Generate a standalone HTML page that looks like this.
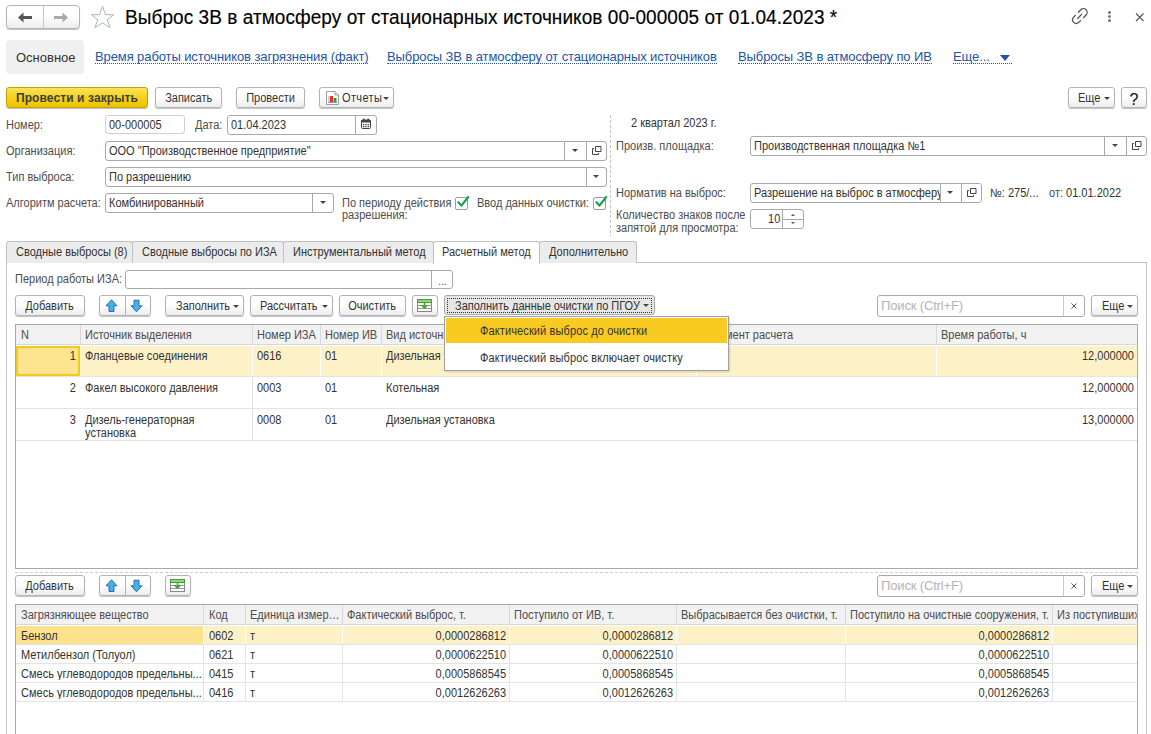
<!DOCTYPE html>
<html><head><meta charset="utf-8">
<style>
*{box-sizing:border-box;margin:0;padding:0}
html,body{width:1151px;height:734px;overflow:hidden;background:#fff}
body{position:relative;font-family:"Liberation Sans",sans-serif;font-size:11.5px;letter-spacing:-0.3px;color:#333}
.a{position:absolute;white-space:nowrap}
.lbl{position:absolute;white-space:nowrap;color:#4d4d4d;line-height:12px;font-size:12px;letter-spacing:0;transform:scaleX(.917);transform-origin:0 0}
.btn{position:absolute;border:1px solid #b4b4b4;border-radius:3px;background:linear-gradient(#fff 0%,#fff 45%,#ececec 100%);box-shadow:0 1px 1px rgba(0,0,0,.25);color:#333;text-align:center;line-height:20px;white-space:nowrap}
.fld{position:absolute;border:1px solid #a9a9a9;border-radius:3px;background:#fff;line-height:19px;padding-left:3px;white-space:nowrap;overflow:hidden;color:#333}
.div{position:absolute;top:0;bottom:0;width:1px;background:#a9a9a9}
.tri{position:absolute;width:0;height:0;border-left:3px solid transparent;border-right:3px solid transparent;border-top:3px solid #444}
.link{position:absolute;white-space:nowrap;color:#1c55a8;font-size:13px;line-height:12px;border-bottom:1px dotted #1c55a8;letter-spacing:-0.1px}

.tab{position:absolute;top:241px;height:22px;border:1px solid #c0c0c0;border-bottom:none;border-radius:3px 3px 0 0;background:#ececec;line-height:20px;padding-left:9px;color:#333;white-space:nowrap}
.tab.act{background:#fff;height:23px;padding-left:8px}
.hd{position:absolute;top:325px;width:1px;height:20px;background:#d8d8d8}
.rd{position:absolute;width:1px;background:#e0e0e0}
.th{position:absolute;top:329px;line-height:12px;color:#4d4d4d;white-space:nowrap;font-size:12px;letter-spacing:0;transform:scaleX(.917);transform-origin:0 0}
.td{position:absolute;line-height:12px;color:#333;white-space:nowrap;font-size:12px;letter-spacing:0;transform:scaleX(.917);transform-origin:0 0}
.td.r{transform-origin:100% 0}
.t{display:inline-block;font-size:12px;letter-spacing:0;transform:scaleX(.917);transform-origin:0 0}
</style></head><body>

<!-- header -->
<div class="btn" style="left:6px;top:5px;width:74px;height:24px;border-radius:4px"></div>
<div class="a" style="left:43px;top:6px;width:1px;height:22px;background:#c8c8c8"></div>
<svg class="a" style="left:17px;top:12px" width="16" height="12" viewBox="0 0 16 12"><path d="M1 5.5 L6.5 0.5 L6.5 4 L15 4 L15 7 L6.5 7 L6.5 10.5 Z" fill="#555"/></svg>
<svg class="a" style="left:53px;top:12px" width="16" height="12" viewBox="0 0 16 12"><path d="M15 5.5 L9.5 0.5 L9.5 4 L1 4 L1 7 L9.5 7 L9.5 10.5 Z" fill="#a8a8a8"/></svg>
<svg class="a" style="left:90px;top:6px" width="25" height="23" viewBox="0 0 25 23"><path d="M12.5 0.3 L15.5 8.6 L23.5 8.8 L17.2 13.8 L20.2 21.8 L12.5 16.8 L4.8 21.8 L7.8 13.8 L1.5 8.8 L9.5 8.6 Z" fill="none" stroke="#a9b5c1" stroke-width="1"/></svg>
<div class="a" style="left:125px;top:5px;font-size:19px;line-height:24px;color:#000;letter-spacing:0.06px;transform:scaleY(1.09);transform-origin:0 10px;-webkit-text-stroke:0.15px #000">Выброс 3В в атмосферу от стационарных источников 00-000005 от 01.04.2023 *</div>
<svg class="a" style="left:1068px;top:5px" width="24" height="22" viewBox="1068 5 24 22"><g fill="none" stroke="#505050" stroke-width="1.25" stroke-linecap="round"><path d="M1078.4 12.3 L1080.8 9.8 A3.7 3.7 0 0 1 1086.1 15 L1083.6 17.5"/><path d="M1075.4 15.4 L1073.4 17.4 A3.7 3.7 0 0 0 1078.6 22.6 L1080.6 20.6"/><path d="M1077.6 18.5 L1081.6 14.4"/></g></svg>
<div class="a" style="left:1108px;top:11px;width:3px;height:3px;border-radius:2px;background:#777"></div>
<div class="a" style="left:1108px;top:15px;width:3px;height:3px;border-radius:2px;background:#777"></div>
<div class="a" style="left:1108px;top:19px;width:3px;height:3px;border-radius:2px;background:#777"></div>
<svg class="a" style="left:1135px;top:12px" width="10" height="10" viewBox="0 0 10 10"><path d="M1 1.5 L8.5 9 M8.5 1.5 L1 9" stroke="#555" stroke-width="1.1"/></svg>

<!-- nav tabs -->
<div class="a" style="left:6px;top:40px;width:78px;height:34px;background:#f0f0f0;border-radius:4px"></div>
<div class="a" style="left:16px;top:50px;font-size:13px;line-height:16px;color:#333;letter-spacing:0">Основное</div>
<div class="link" style="left:95px;top:51px">Время работы источников загрязнения (факт)</div>
<div class="link" style="left:387px;top:51px">Выбросы ЗВ в атмосферу от стационарных источников</div>
<div class="link" style="left:738px;top:51px">Выбросы ЗВ в атмосферу по ИВ</div>
<div class="link" style="left:953px;top:51px;width:59px">Еще...</div>
<div class="tri" style="left:1000px;top:55px;border-left-width:5px;border-right-width:5px;border-top:6px solid #1c55a8"></div>


<!-- toolbar -->
<div class="btn" style="left:6px;top:87px;width:142px;height:21px;background:linear-gradient(#fbe25a 0%,#f5d21a 50%,#ebc300 100%);border-color:#c7a300;font-weight:bold;font-size:12px;color:#3e3e3e;line-height:21px;letter-spacing:0.1px">Провести и закрыть</div>
<div class="btn" style="left:155px;top:87px;width:67px;height:21px"><span class="t" style="transform-origin:50% 0">Записать</span></div>
<div class="btn" style="left:236px;top:87px;width:69px;height:21px"><span class="t" style="transform-origin:50% 0">Провести</span></div>
<div class="btn" style="left:319px;top:87px;width:75px;height:21px"></div>
<svg class="a" style="left:326px;top:91px" width="13" height="14" viewBox="0 0 13 14"><path d="M0.5 0.5 H9 L12.5 4 V13.5 H0.5 Z" fill="#fff" stroke="#8fa3b8"/><path d="M9 0.5 V4 H12.5" fill="#dfe6ee" stroke="#8fa3b8"/><rect x="2.5" y="5" width="1" height="6" fill="#c8a070"/><rect x="4" y="5" width="3" height="6" fill="#e83030"/><rect x="7.5" y="7" width="3" height="4" fill="#2aa02a"/><rect x="2" y="11" width="9" height="0.8" fill="#9070a0"/></svg>
<div class="a" style="left:342px;top:92px;line-height:12px;color:#333;font-size:12px;letter-spacing:0.4px;transform:scaleX(.917);transform-origin:0 0">Отчеты</div>
<div class="tri" style="left:383px;top:97px;border-left-width:3px;border-right-width:3px;border-top-width:3px"></div>
<div class="btn" style="left:1068px;top:87px;width:47px;height:21px"><span class="t" style="position:absolute;left:9px;top:0">Еще</span></div>
<div class="tri" style="left:1104px;top:97px"></div>
<div class="btn" style="left:1121px;top:87px;width:26px;height:21px;font-size:16px;color:#111;letter-spacing:0;line-height:23px;-webkit-text-stroke:0.1px #111">?</div>

<!-- form left -->
<div class="lbl" style="left:6px;top:119px">Номер:</div>
<div class="fld" style="left:105px;top:115px;width:80px;height:19px;border-color:#d0d0d0"><span class="t" style="transform-origin:0 0">00-000005</span></div>
<div class="lbl" style="left:195px;top:119px">Дата:</div>
<div class="fld" style="left:227px;top:115px;width:150px;height:20px"><span class="t" style="transform-origin:0 0">01.04.2023</span><div class="div" style="left:127px"></div></div>
<svg class="a" style="left:361px;top:118px" width="10" height="11" viewBox="0 0 10 11"><rect x="0.5" y="2" width="9" height="8.5" rx="1" fill="#fff" stroke="#444"/><rect x="0.5" y="2" width="9" height="2.5" fill="#444"/><rect x="2" y="0.5" width="1.5" height="2" fill="#444"/><rect x="6.5" y="0.5" width="1.5" height="2" fill="#444"/><g fill="#444"><rect x="2" y="6" width="1.3" height="1.3"/><rect x="4.3" y="6" width="1.3" height="1.3"/><rect x="6.6" y="6" width="1.3" height="1.3"/><rect x="2" y="8" width="1.3" height="1.3"/><rect x="4.3" y="8" width="1.3" height="1.3"/><rect x="6.6" y="8" width="1.3" height="1.3"/></g></svg>

<div class="lbl" style="left:6px;top:145px">Организация:</div>
<div class="fld" style="left:105px;top:141px;width:502px;height:20px"><span class="t" style="transform-origin:0 0">ООО "Производственное предприятие"</span><div class="div" style="left:458px"></div><div class="div" style="left:480px"></div></div>
<div class="tri" style="left:572px;top:149px;border-left-width:3px;border-right-width:3px"></div>
<svg class="a" style="left:591px;top:146px" width="11" height="10" viewBox="0 0 11 10"><path d="M4.5 0.5 H10 V5.5 H4.5 Z" fill="none" stroke="#444"/><path d="M3 2.5 H1.5 V8.5 H7.5 V7" fill="none" stroke="#444"/></svg>

<div class="lbl" style="left:6px;top:171px">Тип выброса:</div>
<div class="fld" style="left:105px;top:167px;width:502px;height:20px"><span class="t" style="transform-origin:0 0">По разрешению</span><div class="div" style="left:480px"></div></div>
<div class="tri" style="left:593px;top:175px;border-left-width:3px;border-right-width:3px"></div>

<div class="lbl" style="left:6px;top:197px">Алгоритм расчета:</div>
<div class="fld" style="left:105px;top:193px;width:229px;height:20px"><span class="t" style="transform-origin:0 0">Комбинированный</span><div class="div" style="left:206px"></div></div>
<div class="tri" style="left:320px;top:201px;border-left-width:3px;border-right-width:3px"></div>
<div class="lbl" style="left:342px;top:197px">По периоду действия<br>разрешения:</div>
<div class="a" style="left:455px;top:197px;width:13px;height:13px;border:1px solid #9d9d9d;border-radius:2px;background:#fff"></div>
<svg class="a" style="left:456px;top:193px" width="15" height="15" viewBox="0 0 15 15"><path d="M2.4 9.2 L5.4 12.6 L12.2 4" fill="none" stroke="#14a04a" stroke-width="2.1" stroke-linecap="round" stroke-linejoin="round"/></svg>
<div class="lbl" style="left:477px;top:197px">Ввод данных очистки:</div>
<div class="a" style="left:593px;top:197px;width:13px;height:13px;border:1px solid #9d9d9d;border-radius:2px;background:#fff"></div>
<svg class="a" style="left:594px;top:193px" width="15" height="15" viewBox="0 0 15 15"><path d="M2.4 9.2 L5.4 12.6 L12.2 4" fill="none" stroke="#14a04a" stroke-width="2.1" stroke-linecap="round" stroke-linejoin="round"/></svg>

<div class="a" style="left:610px;top:115px;width:1px;height:121px;background:repeating-linear-gradient(#c4c4c4 0 3px,transparent 3px 5px)"></div>

<!-- form right -->
<div class="lbl" style="left:631px;top:117px;color:#333">2 квартал 2023 г.</div>
<div class="lbl" style="left:616px;top:140px">Произв. площадка:</div>
<div class="fld" style="left:750px;top:136px;width:397px;height:20px"><span class="t" style="transform-origin:0 0">Производственная площадка №1</span><div class="div" style="left:353px"></div><div class="div" style="left:375px"></div></div>
<div class="tri" style="left:1112px;top:144px;border-left-width:3px;border-right-width:3px"></div>
<svg class="a" style="left:1131px;top:141px" width="11" height="10" viewBox="0 0 11 10"><path d="M4.5 0.5 H10 V5.5 H4.5 Z" fill="none" stroke="#444"/><path d="M3 2.5 H1.5 V8.5 H7.5 V7" fill="none" stroke="#444"/></svg>

<div class="lbl" style="left:616px;top:187px">Норматив на выброс:</div>
<div class="fld" style="left:750px;top:183px;width:232px;height:20px"><span class="t" style="transform-origin:0 0">Разрешение на выброс в атмосферу</span><div class="div" style="left:189px;background:#a9a9a9"></div><div class="div" style="left:210px"></div><div style="position:absolute;left:190px;top:0;bottom:0;width:40px;background:#fff"></div><div class="div" style="left:189px"></div><div class="div" style="left:210px"></div></div>
<div class="tri" style="left:947px;top:191px;border-left-width:3px;border-right-width:3px"></div>
<svg class="a" style="left:966px;top:188px" width="11" height="10" viewBox="0 0 11 10"><path d="M4.5 0.5 H10 V5.5 H4.5 Z" fill="none" stroke="#444"/><path d="M3 2.5 H1.5 V8.5 H7.5 V7" fill="none" stroke="#444"/></svg>
<div class="lbl" style="left:990px;top:187px;color:#333">№: 275/...</div>
<div class="lbl" style="left:1049px;top:187px"><span style="color:#4d4d4d">от:</span> <span style="color:#333">01.01.2022</span></div>

<div class="lbl" style="left:616px;top:209px;line-height:13px">Количество знаков после<br>запятой для просмотра:</div>
<div class="fld" style="left:750px;top:209px;width:54px;height:20px;text-align:right;padding-right:23px"><span class="t" style="transform-origin:100% 0">10</span><div class="div" style="left:31px"></div><div style="position:absolute;left:32px;right:0;top:9px;height:1px;background:#a9a9a9"></div></div>
<div class="tri" style="left:791px;top:214px;border-top:0;border-bottom:2px solid #555;border-left-width:2px;border-right-width:2px"></div>
<div class="tri" style="left:791px;top:222px;border-top:2px solid #555;border-left-width:2px;border-right-width:2px"></div>


<!-- tabs -->
<div class="a" style="left:6px;top:262px;width:1141px;height:1px;background:#bdbdbd"></div>
<div class="a" style="left:6px;top:262px;width:1px;height:472px;background:#c6c6c6"></div>
<div class="a" style="left:1146px;top:262px;width:1px;height:472px;background:#c6c6c6"></div>
<div class="tab" style="left:6px;width:127px"><span class="t" style="transform-origin:0 0">Сводные выбросы (8)</span></div>
<div class="tab" style="left:132px;width:152px"><span class="t" style="transform-origin:0 0">Сводные выбросы по ИЗА</span></div>
<div class="tab" style="left:283px;width:151px"><span class="t" style="transform-origin:0 0">Инструментальный метод</span></div>
<div class="tab act" style="left:433px;width:107px"><span class="t" style="transform-origin:0 0">Расчетный метод</span></div>
<div class="tab" style="left:539px;width:98px"><span class="t" style="transform-origin:0 0">Дополнительно</span></div>

<div class="lbl" style="left:15px;top:273px">Период работы ИЗА:</div>
<div class="fld" style="left:125px;top:270px;width:328px;height:19px"><div class="div" style="left:305px"></div><span style="position:absolute;left:312px;top:1px;color:#555">...</span></div>

<!-- toolbar 2 -->
<div class="btn" style="left:15px;top:295px;width:70px;height:21px"><span class="t" style="transform-origin:50% 0">Добавить</span></div>
<div class="btn" style="left:99px;top:295px;width:52px;height:21px"></div>
<div class="a" style="left:125px;top:296px;width:1px;height:19px;background:#b4b4b4"></div>
<svg class="a" style="left:105px;top:299px" width="13" height="14" viewBox="0 0 13 14"><path d="M6.5 0.8 L12 6.8 H9 V12.5 H4 V6.8 H1 Z" fill="#46b0ea" stroke="#1a66a0" stroke-width="0.9"/></svg>
<svg class="a" style="left:130px;top:299px" width="13" height="14" viewBox="0 0 13 14"><path d="M6.5 12.8 L12 6.8 H9 V1.2 H4 V6.8 H1 Z" fill="#46b0ea" stroke="#1a66a0" stroke-width="0.9"/></svg>
<div class="btn" style="left:165px;top:295px;width:79px;height:21px;text-align:left;padding-left:10px"><span class="t" style="transform-origin:0 0">Заполнить</span></div>
<div class="tri" style="left:233px;top:305px"></div>
<div class="btn" style="left:250px;top:295px;width:83px;height:21px;text-align:left;padding-left:9px"><span class="t" style="transform-origin:0 0">Рассчитать</span></div>
<div class="tri" style="left:322px;top:305px"></div>
<div class="btn" style="left:339px;top:295px;width:67px;height:21px"><span class="t" style="transform-origin:50% 0">Очистить</span></div>
<div class="btn" style="left:412px;top:295px;width:26px;height:21px"></div>
<svg class="a" style="left:417px;top:299px" width="15" height="13" viewBox="0 0 15 13"><rect x="0.5" y="0.5" width="14" height="12" fill="#fff" stroke="#888"/><rect x="0.5" y="0.5" width="14" height="3" fill="#8fd87a" stroke="#4a9a3a"/><path d="M1 6.5 H14 M1 9.5 H14" stroke="#999" stroke-width="1"/><path d="M7.5 3.5 V8 M4.5 6 L7.5 9 L10.5 6" fill="none" stroke="#4aa03a" stroke-width="1.6"/></svg>
<div class="btn" style="left:444px;top:295px;width:211px;height:20px;background:#e6e6e6;box-shadow:none;border-color:#a8a8a8;text-align:left;padding-left:10px;line-height:20px"><span class="t" style="transform-origin:0 0">Заполнить данные очистки по ПГОУ</span></div>
<div class="a" style="left:447px;top:298px;width:205px;height:15px;border:1px dotted #333"></div>
<div class="tri" style="left:643px;top:304px"></div>

<div class="fld" style="left:877px;top:295px;width:208px;height:22px;color:#b4b4b4;line-height:20px;border-color:#a9a9a9;font-size:13px;letter-spacing:-0.15px;padding-left:3px">Поиск (Ctrl+F)<div class="div" style="left:185px;background:#c8c8c8"></div></div>
<svg class="a" style="left:1070px;top:302px" width="8" height="8" viewBox="0 0 8 8"><path d="M1.5 1.5 L6.5 6.5 M6.5 1.5 L1.5 6.5" stroke="#555" stroke-width="1"/></svg>
<div class="btn" style="left:1091px;top:295px;width:47px;height:21px"><span class="t" style="position:absolute;left:10px;top:0">Еще</span></div>
<div class="tri" style="left:1127px;top:305px"></div>

<!-- table 1 -->
<div class="a" style="left:15px;top:324px;width:1123px;height:245px;border:1px solid #a9a9a9;background:#fff"></div>
<div class="a" style="left:16px;top:325px;width:1121px;height:20px;background:#f2f2f2;border-bottom:1px solid #d8d8d8"></div>
<div class="hd" style="left:80px"></div><div class="hd" style="left:252px"></div><div class="hd" style="left:320px"></div><div class="hd" style="left:381px"></div><div class="hd" style="left:696px"></div><div class="hd" style="left:936px"></div>
<div class="th" style="left:21px">N</div>
<div class="th" style="left:85px">Источник выделения</div>
<div class="th" style="left:257px">Номер ИЗА</div>
<div class="th" style="left:325px">Номер ИВ</div>
<div class="th" style="left:386px">Вид источника</div>
<div class="th" style="left:701px">Документ расчета</div>
<div class="th" style="left:941px">Время работы, ч</div>

<div class="a" style="left:16px;top:346px;width:1121px;height:31px;background:#fdf1c8;border-bottom:1px solid #e4e4e4"></div>
<div class="a" style="left:16px;top:346px;width:64px;height:30px;background:#fde48f;border:2px solid #f8c81c"></div>
<div class="rd" style="left:252px;top:346px;height:30px;background:#fff"></div><div class="rd" style="left:320px;top:346px;height:30px;background:#fff"></div><div class="rd" style="left:381px;top:346px;height:30px;background:#fff"></div><div class="rd" style="left:696px;top:346px;height:30px;background:#fff"></div><div class="rd" style="left:936px;top:346px;height:30px;background:#fff"></div>
<div class="a" style="left:16px;top:408px;width:1121px;height:1px;background:#e4e4e4"></div>
<div class="a" style="left:16px;top:440px;width:1121px;height:1px;background:#e4e4e4"></div>
<div class="rd" style="left:252px;top:376px;height:65px"></div>

<div class="td r" style="left:16px;width:60px;text-align:right;top:350px">1</div>
<div class="td" style="left:85px;top:350px">Фланцевые соединения</div>
<div class="td" style="left:257px;top:350px">0616</div>
<div class="td" style="left:325px;top:350px">01</div>
<div class="td" style="left:386px;top:350px">Дизельная установка</div>
<div class="td r" style="left:937px;width:197px;text-align:right;top:350px">12,000000</div>

<div class="td r" style="left:16px;width:60px;text-align:right;top:382px">2</div>
<div class="td" style="left:85px;top:382px">Факел высокого давления</div>
<div class="td" style="left:257px;top:382px">0003</div>
<div class="td" style="left:325px;top:382px">01</div>
<div class="td" style="left:386px;top:382px">Котельная</div>
<div class="td r" style="left:937px;width:197px;text-align:right;top:382px">12,000000</div>

<div class="td r" style="left:16px;width:60px;text-align:right;top:414px">3</div>
<div class="td" style="left:85px;top:414px;line-height:12.5px">Дизель-генераторная<br>установка</div>
<div class="td" style="left:257px;top:414px">0008</div>
<div class="td" style="left:325px;top:414px">01</div>
<div class="td" style="left:386px;top:414px">Дизельная установка</div>
<div class="td r" style="left:937px;width:197px;text-align:right;top:414px">13,000000</div>

<!-- dropdown -->
<div class="a" style="left:444px;top:316px;width:285px;height:55px;background:#fff;border:1px solid #a0a0a0;box-shadow:1px 1px 2px rgba(0,0,0,.15)"></div>
<div class="a" style="left:446px;top:318px;width:281px;height:25px;background:#f9cb22"></div>
<div class="td" style="left:480px;top:325px;color:#333;letter-spacing:0.13px">Фактический выброс до очистки</div>
<div class="td" style="left:480px;top:352px;color:#333;letter-spacing:0.13px">Фактический выброс включает очистку</div>


<!-- lower toolbar -->
<div class="a" style="left:15px;top:572px;width:1123px;height:1px;background:repeating-linear-gradient(90deg,#cfcfcf 0 3px,transparent 3px 5px)"></div>
<div class="btn" style="left:15px;top:575px;width:70px;height:21px"><span class="t" style="transform-origin:50% 0">Добавить</span></div>
<div class="btn" style="left:99px;top:575px;width:52px;height:21px"></div>
<div class="a" style="left:125px;top:576px;width:1px;height:19px;background:#b4b4b4"></div>
<svg class="a" style="left:105px;top:579px" width="13" height="14" viewBox="0 0 13 14"><path d="M6.5 0.8 L12 6.8 H9 V12.5 H4 V6.8 H1 Z" fill="#46b0ea" stroke="#1a66a0" stroke-width="0.9"/></svg>
<svg class="a" style="left:130px;top:579px" width="13" height="14" viewBox="0 0 13 14"><path d="M6.5 12.8 L12 6.8 H9 V1.2 H4 V6.8 H1 Z" fill="#46b0ea" stroke="#1a66a0" stroke-width="0.9"/></svg>
<div class="btn" style="left:165px;top:575px;width:26px;height:21px"></div>
<svg class="a" style="left:170px;top:579px" width="15" height="13" viewBox="0 0 15 13"><rect x="0.5" y="0.5" width="14" height="12" fill="#fff" stroke="#888"/><rect x="0.5" y="0.5" width="14" height="3" fill="#8fd87a" stroke="#4a9a3a"/><path d="M1 6.5 H14 M1 9.5 H14" stroke="#999" stroke-width="1"/><path d="M7.5 3.5 V8 M4.5 6 L7.5 9 L10.5 6" fill="none" stroke="#4aa03a" stroke-width="1.6"/></svg>
<div class="fld" style="left:877px;top:575px;width:208px;height:22px;color:#b4b4b4;line-height:20px;border-color:#a9a9a9;font-size:13px;letter-spacing:-0.15px;padding-left:3px">Поиск (Ctrl+F)<div class="div" style="left:185px;background:#c8c8c8"></div></div>
<svg class="a" style="left:1070px;top:582px" width="8" height="8" viewBox="0 0 8 8"><path d="M1.5 1.5 L6.5 6.5 M6.5 1.5 L1.5 6.5" stroke="#555" stroke-width="1"/></svg>
<div class="btn" style="left:1091px;top:575px;width:47px;height:21px"><span class="t" style="position:absolute;left:10px;top:0">Еще</span></div>
<div class="tri" style="left:1127px;top:585px"></div>

<!-- table 2 -->
<div class="a" style="left:15px;top:604px;width:1123px;height:140px;border:1px solid #a9a9a9;background:#fff"></div>
<div class="a" style="left:16px;top:605px;width:1121px;height:20px;background:#f2f2f2;border-bottom:1px solid #d8d8d8"></div>
<div class="a" style="left:203px;top:605px;width:1px;height:20px;background:#d8d8d8"></div><div class="a" style="left:203px;top:625px;width:1px;height:77px;background:#e4e4e4"></div><div class="a" style="left:245px;top:605px;width:1px;height:20px;background:#d8d8d8"></div><div class="a" style="left:245px;top:625px;width:1px;height:77px;background:#e4e4e4"></div><div class="a" style="left:342px;top:605px;width:1px;height:20px;background:#d8d8d8"></div><div class="a" style="left:342px;top:625px;width:1px;height:77px;background:#e4e4e4"></div><div class="a" style="left:509px;top:605px;width:1px;height:20px;background:#d8d8d8"></div><div class="a" style="left:509px;top:625px;width:1px;height:77px;background:#e4e4e4"></div><div class="a" style="left:676px;top:605px;width:1px;height:20px;background:#d8d8d8"></div><div class="a" style="left:676px;top:625px;width:1px;height:77px;background:#e4e4e4"></div><div class="a" style="left:845px;top:605px;width:1px;height:20px;background:#d8d8d8"></div><div class="a" style="left:845px;top:625px;width:1px;height:77px;background:#e4e4e4"></div><div class="a" style="left:1052px;top:605px;width:1px;height:20px;background:#d8d8d8"></div><div class="a" style="left:1052px;top:625px;width:1px;height:77px;background:#e4e4e4"></div>
<div class="a" style="left:16px;top:626px;width:1121px;height:18px;background:#fdf1c8"></div>
<div class="a" style="left:16px;top:626px;width:187px;height:18px;background:#fde28e"></div><div class="a" style="left:203px;top:625px;width:1px;height:19px;background:#fff"></div><div class="a" style="left:245px;top:625px;width:1px;height:19px;background:#fff"></div><div class="a" style="left:342px;top:625px;width:1px;height:19px;background:#fff"></div><div class="a" style="left:509px;top:625px;width:1px;height:19px;background:#fff"></div><div class="a" style="left:676px;top:625px;width:1px;height:19px;background:#fff"></div><div class="a" style="left:845px;top:625px;width:1px;height:19px;background:#fff"></div><div class="a" style="left:1052px;top:625px;width:1px;height:19px;background:#fff"></div>
<div class="th" style="left:21px;top:609px;">Загрязняющее вещество</div>
<div class="th" style="left:209px;top:609px;">Код</div>
<div class="th" style="left:250px;top:609px;">Единица измер…</div>
<div class="th" style="left:347px;top:609px;">Фактический выброс, т.</div>
<div class="th" style="left:514px;top:609px;">Поступило от ИВ, т.</div>
<div class="th" style="left:681px;top:609px;">Выбрасывается без очистки, т.</div>
<div class="th" style="left:850px;top:609px;">Поступило на очистные сооружения, т.</div>
<div class="th" style="left:1057px;top:609px;width:87px;overflow:hidden;">Из поступивших на очистку</div>
<div class="a" style="left:16px;top:644px;width:1121px;height:1px;background:#e4e4e4"></div>
<div class="td" style="left:21px;top:630px">Бензол</div><div class="td" style="left:209px;top:630px">0602</div><div class="td" style="left:250px;top:630px">т</div><div class="td r" style="left:343px;width:163px;text-align:right;top:630px">0,0000286812</div><div class="td r" style="left:510px;width:163px;text-align:right;top:630px">0,0000286812</div><div class="td r" style="left:846px;width:203px;text-align:right;top:630px">0,0000286812</div>
<div class="a" style="left:16px;top:663px;width:1121px;height:1px;background:#e4e4e4"></div>
<div class="td" style="left:21px;top:649px">Метилбензол (Толуол)</div><div class="td" style="left:209px;top:649px">0621</div><div class="td" style="left:250px;top:649px">т</div><div class="td r" style="left:343px;width:163px;text-align:right;top:649px">0,0000622510</div><div class="td r" style="left:510px;width:163px;text-align:right;top:649px">0,0000622510</div><div class="td r" style="left:846px;width:203px;text-align:right;top:649px">0,0000622510</div>
<div class="a" style="left:16px;top:682px;width:1121px;height:1px;background:#e4e4e4"></div>
<div class="td" style="left:21px;top:668px;width:197px;overflow:hidden">Смесь углеводородов предельны...</div><div class="td" style="left:209px;top:668px">0415</div><div class="td" style="left:250px;top:668px">т</div><div class="td r" style="left:343px;width:163px;text-align:right;top:668px">0,0005868545</div><div class="td r" style="left:510px;width:163px;text-align:right;top:668px">0,0005868545</div><div class="td r" style="left:846px;width:203px;text-align:right;top:668px">0,0005868545</div>
<div class="a" style="left:16px;top:701px;width:1121px;height:1px;background:#e4e4e4"></div>
<div class="td" style="left:21px;top:687px;width:197px;overflow:hidden">Смесь углеводородов предельны...</div><div class="td" style="left:209px;top:687px">0416</div><div class="td" style="left:250px;top:687px">т</div><div class="td r" style="left:343px;width:163px;text-align:right;top:687px">0,0012626263</div><div class="td r" style="left:510px;width:163px;text-align:right;top:687px">0,0012626263</div><div class="td r" style="left:846px;width:203px;text-align:right;top:687px">0,0012626263</div>
</body></html>
